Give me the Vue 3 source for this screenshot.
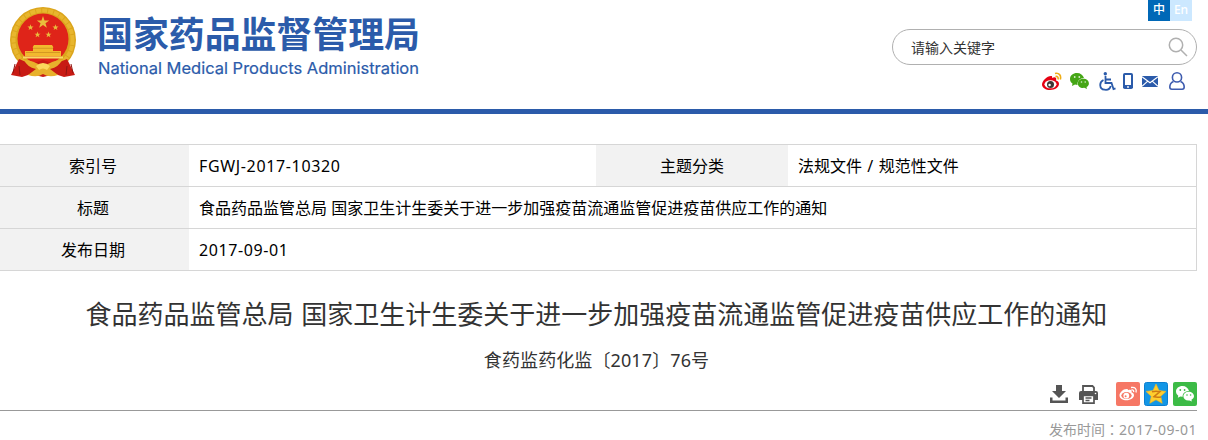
<template>
  <div class="page">
    <header class="header">
      <div class="brand">
        <svg class="emblem" viewBox="0 0 66 70">
          <circle cx="33" cy="33" r="33" fill="#dba51c" />
          <circle cx="33" cy="33" r="29.500" fill="none" stroke="#e8b62e" stroke-width="4" stroke-dasharray="5 1" />
          <circle cx="33" cy="32" r="25.500" fill="#df2419" />
          <polygon v-for="star in stars" :key="star.id" :points="star.points" fill="#e9bd3c" />
          <path d="M24 38h18l1.500 2.500h-21zM23 40.500h20V44H23zM15 44h36v5.500H15z" fill="#f2b92e" />
          <path d="M23 41.300h20M16 45.500h34" stroke="#c98a1c" stroke-width=".7" />
          <path d="M13 49.500h40v2H13z" fill="#f8d965" />
          <path d="M9 52l12 5 12-4 12 4 12-5 8 16-11 2-9-3-12 3-12-3-9 3-11-2z" fill="#c81b14" />
          <path d="M14 53q9 0 19 7 10-7 19-7-3 7-12 9l8 6q-9 3-15-1-6 4-15 1l8-6q-9-2-12-9z" fill="#e8b12c" />
          <path d="M26 59q7-6 14 0l-3 4q-4-3-8 0z" fill="#fbd85c" />
          <path d="M5 57l-2 9M9 59l1 9M61 57l2 9M57 59l-1 9" stroke="#8f1511" stroke-width="1" />
        </svg>
        <svg class="brand-text" viewBox="0 0 330 78">
          <text class="brand-cn" x="-1" y="48" textLength="323" lengthAdjust="spacingAndGlyphs">国家药品监督管理局</text>
          <text class="brand-en" x="0" y="74" textLength="321" lengthAdjust="spacingAndGlyphs">National Medical Products Administration</text>
        </svg>
      </div>

      <div class="tools">
        <div class="lang">
          <span class="lang-item active">中</span>
          <span class="lang-item">En</span>
        </div>
        <div class="search">
          <span>请输入关键字</span>
          <svg width="20" height="20" viewBox="0 0 20 20" fill="none" stroke="#b0b0b0" stroke-width="1.500">
            <circle cx="8" cy="8" r="6.700" />
            <path d="M13 13l6 6" />
          </svg>
        </div>
        <div class="links">
          <svg class="weibo" width="20" height="18" viewBox="0 0 20 18">
            <path d="M9 4C5 4 0 9 0 12.500 0 16 4 18 8 18c5 0 9-3 9-6 0-2-1-3-3-3.500 1-3-1-4-4-2.500C10.500 4.500 10 4 9 4z" fill="#e60012" />
            <ellipse cx="8.500" cy="12.300" rx="6" ry="4" fill="#fff" />
            <circle cx="8.500" cy="12.500" r="3.500" fill="#3d3434" />
            <circle cx="7.600" cy="13" r="1.200" fill="#fff" />
            <path d="M13 1.500c4-1 6.500 2 5.300 6M13.500 4.500c2-.4 3 1 2.500 3" fill="none" stroke="#efad16" stroke-width="1.600" />
          </svg>
          <svg class="wechat" width="19" height="16" viewBox="0 0 19 16">
            <path d="M7 0C3 0 0 2.500 0 6c0 2 1 3.500 2.500 4.500L2 13l3-1.500 2.500.4C7 8 10 5 14 5 13 2 10.500 0 7 0z" fill="#45a616" />
            <path d="M13.300 5.800c-3.200 0-5.500 2-5.500 4.600 0 2.800 2.800 5 6.500 4.400L17 16l-.5-2c1.500-.8 2.400-2 2.400-3.600 0-2.600-2.400-4.600-5.600-4.600z" fill="#45a616" />
            <g fill="#d9efcf">
              <circle cx="4.700" cy="4" r=".9" />
              <circle cx="9.300" cy="4" r=".9" />
              <circle cx="11.500" cy="9" r=".8" />
              <circle cx="15.200" cy="9" r=".8" />
            </g>
          </svg>
          <svg class="access" width="17" height="19" viewBox="0 0 17 19" fill="none" stroke="#2b5baa" stroke-width="1.800">
            <circle cx="6.300" cy="1.800" r="1.700" fill="#2b5baa" stroke="none" />
            <path d="M6.500 4v7h6l2 6 2-.7M7 7.500h5M4.500 8C0 10 0 17 5.500 17.700c3 .5 5.500-1 6.200-3.700" />
          </svg>
          <svg class="phone" width="10" height="16" viewBox="0 0 10 16">
            <rect width="10" height="16" rx="1.800" fill="#2b5baa" />
            <path d="M2 2h6v10H2z" fill="#fff" />
            <circle cx="5" cy="14" r=".9" fill="#fff" />
          </svg>
          <svg class="mail" width="16" height="11" viewBox="0 0 16 11">
            <path d="M0 0h16v11H0z" fill="#2b5baa" />
            <path d="M0 .7l8 6 8-6M0 10.300l5.500-5M16 10.300l-5.500-5" fill="none" stroke="#fff" stroke-width="1.100" />
          </svg>
          <svg class="user" width="16" height="18" viewBox="0 0 16 18" fill="none" stroke="#3e5caf" stroke-width="1.600">
            <circle cx="8" cy="5.400" r="4.600" />
            <path d="M4.500 9.500C2 10.500.8 12.500.8 15c0 1.500.7 2.200 2 2.200h10.400c1.300 0 2-.7 2-2.200 0-2.500-1.200-4.500-3.700-5.500" />
          </svg>
        </div>
      </div>
    </header>

    <table class="info">
      <tbody>
        <tr>
          <th>索引号</th>
          <td class="code">FGWJ-2017-10320</td>
          <th>主题分类</th>
          <td class="category">法规文件 / 规范性文件</td>
        </tr>
        <tr>
          <th>标题</th>
          <td colspan="3">{{ title }}</td>
        </tr>
        <tr>
          <th>发布日期</th>
          <td colspan="3" class="date">{{ date }}</td>
        </tr>
      </tbody>
    </table>

    <main class="article">
      <h1>{{ title }}</h1>
      <p class="number">食药监药化监〔2017〕76号</p>
      <div class="actions">
        <svg class="download" width="18" height="18" viewBox="0 0 18 18" fill="#555">
          <path d="M6 0h6v6h4l-7 7-7-7h4z" />
          <path d="M0 12.500h2.500v3h13v-3H18V18H0z" />
        </svg>
        <svg class="print" width="19" height="19" viewBox="0 0 19 19">
          <path d="M4 6V1h9.500L15 2.500V6" fill="none" stroke="#555" stroke-width="1.800" />
          <path d="M2 6h15q2 0 2 2v7h-4v-4H4v4H0V8q0-2 2-2z" fill="#555" />
          <path d="M4 10.500h11v7.600H4z" fill="#fff" stroke="#555" stroke-width="1.700" />
          <path d="M6.500 13h6M6.500 15.500h4" stroke="#555" stroke-width="1.300" />
          <circle cx="16.500" cy="8.500" r=".8" fill="#fff" />
        </svg>
        <svg class="share-weibo" width="24" height="24" viewBox="0 0 24 24">
          <rect width="24" height="24" rx="2" fill="#f67765" />
          <path d="M10.500 7C7 7 3.500 10.500 3.500 13.500c0 3 3.300 4.800 7 4.800 4.300 0 7.500-2.500 7.500-5 0-1.700-1-2.500-2.500-3 .8-2.300-.8-3-3.500-2 .2-.8-.4-1.300-1.500-1.300z" fill="#fff" />
          <ellipse cx="10.500" cy="13.600" rx="5.200" ry="3.500" fill="#f67765" />
          <circle cx="10.300" cy="13.700" r="2.900" fill="#fff" />
          <circle cx="9.600" cy="14.200" r="1" fill="#f67765" />
          <path d="M15 5.500c4-.8 6 1.500 5 5M15.500 8c1.600-.3 2.500.7 2.100 2.200" fill="none" stroke="#fff" stroke-width="1.300" />
        </svg>
        <svg class="share-qzone" width="24" height="24" viewBox="0 0 24 24">
          <rect x=".5" y=".5" width="23" height="23" rx="2" fill="#1296e6" stroke="#0b7fd0" />
          <path d="M12 2l3 6.500 7 .9-5.200 4.900 1.400 7L12 17.800 5.800 21.300l1.400-7L2 9.400l7-.9z" fill="#ffce2e" stroke="#f6b51b" stroke-width=".6" />
          <path d="M8 9.700q4-1 8 0l-6 5q3 .8 7 .2" fill="none" stroke="#cf7a13" stroke-width="1.500" />
        </svg>
        <svg class="share-wechat" width="24" height="24" viewBox="0 0 24 24">
          <rect width="24" height="24" rx="2" fill="#3cbb46" />
          <path d="M9.500 4C5.700 4 3 6.400 3 9.500c0 1.800.9 3.200 2.300 4.200l-.5 2.100 2.500-1.300 2.400.3C9.300 11.500 12 9 16 9c-.7-3-3.300-5-6.500-5z" fill="#fff" />
          <path d="M15.700 9.800c-3 0-5.300 1.900-5.300 4.400 0 2.700 2.600 4.700 6 4.200l2.500 1.200-.5-1.900c1.500-.8 2.600-2 2.600-3.500 0-2.500-2.400-4.400-5.300-4.400z" fill="#fff" />
          <g fill="#3cbb46">
            <circle cx="7.300" cy="8" r=".9" />
            <circle cx="11.600" cy="8" r=".9" />
            <circle cx="14" cy="13" r=".8" />
            <circle cx="17.600" cy="13" r=".8" />
          </g>
        </svg>
      </div>
      <p class="publish">发布时间<span class="colon">：</span><span class="publish-date">{{ date }}</span></p>
    </main>
  </div>
</template>

<script setup>
const title = "食品药品监管总局 国家卫生计生委关于进一步加强疫苗流通监管促进疫苗供应工作的通知";
const date = "2017-09-01";

const starPoints = (cx, cy, r) =>
  Array.from({ length: 10 }, (_, i) => {
    const radius = i % 2 ? r * 0.4 : r;
    const angle = (Math.PI / 5) * i - Math.PI / 2;
    return `${cx + radius * Math.cos(angle)},${cy + radius * Math.sin(angle)}`;
  }).join(" ");

const stars = [
  [33, 15.5, 6.5],
  [20.5, 20.5, 3.2],
  [45.5, 20.5, 3.2],
  [27.5, 27.7, 3.2],
  [38.5, 27.7, 3.2],
].map(([cx, cy, r], id) => ({ id, points: starPoints(cx, cy, r) }));
</script>

<style>
body {
  margin: 0;
  background: #fff;
}
</style>

<style scoped>
.page {
  width: 1208px;
  height: 440px;
  overflow: hidden;
  font-family: "Noto Sans", "Noto Sans CJK SC", sans-serif;
  color: #333;
}

svg {
  display: block;
  flex: none;
}

.header {
  display: flex;
  justify-content: space-between;
  height: 109px;
  border-bottom: 5px solid #2b5baa;
}

.brand {
  display: flex;
  padding-left: 10px;
}

.emblem {
  width: 66px;
  height: 70px;
  margin-top: 7px;
}

.brand-text {
  width: 330px;
  height: 78px;
  margin-left: 22px;
  overflow: visible;
}

.brand-text text {
  fill: #2b5baa;
}

.brand-cn {
  font: bold 36px "Noto Sans CJK SC", sans-serif;
}

.brand-en {
  font: 400 16.5px Inter, "Liberation Sans", sans-serif;
  stroke: #2b5baa;
  stroke-width: 0.2px;
}

.tools {
  width: 305px;
  margin-right: 11px;
}

.lang {
  display: flex;
  justify-content: flex-end;
  margin-right: 5px;
}

.lang-item {
  width: 22px;
  height: 21px;
  background: #cce8ff;
  color: #fff;
  font-size: 12px;
  font-weight: 500;
  line-height: 20px;
  text-align: center;
}

.lang-item.active {
  background: #0068b7;
}

.search {
  display: flex;
  align-items: center;
  justify-content: space-between;
  box-sizing: border-box;
  height: 36px;
  margin-top: 8px;
  padding: 0 8px 0 18px;
  border: 1px solid #b0b0b0;
  border-radius: 18px;
  font-size: 14px;
}

.search span {
  padding-bottom: 1px;
}

.links {
  display: flex;
  align-items: center;
  justify-content: flex-end;
  height: 20px;
  margin: 6px 12px 0 0;
}

.wechat {
  margin-left: 8px;
}

.access {
  margin-left: 10px;
}

.phone {
  margin-left: 7px;
}

.mail {
  margin-left: 9px;
}

.user {
  margin-left: 11px;
}

.info {
  width: 1197px;
  margin-top: 30px;
  border-collapse: separate;
  border-spacing: 0;
  table-layout: fixed;
  border-top: 1px solid #d6d6d6;
  border-right: 1px solid #d6d6d6;
  font-size: 16px;
  color: #000;
}

.info th,
.info td {
  box-sizing: border-box;
  height: 42px;
  padding: 0;
  border-bottom: 1px solid #d6d6d6;
  line-height: 24px;
  font-weight: normal;
  white-space: nowrap;
}

.info th {
  width: 189px;
  background: #f2f2f2;
  text-align: center;
}

.info th:first-child {
  padding-right: 3px;
}

.info td {
  padding-left: 10px;
  text-align: left;
}

.info tr:first-child td:nth-child(2) {
  width: 407px;
}

.info th:nth-child(3) {
  width: 192px;
}

.info .code {
  letter-spacing: 0.65px;
}

.info .category {
  word-spacing: 1.2px;
}

.info .date {
  letter-spacing: 0.6px;
}

.article {
  width: 1197px;
}

h1 {
  margin: 23px 0 0;
  padding-right: 4px;
  font-size: 26px;
  font-weight: normal;
  line-height: 40px;
  text-align: center;
  word-spacing: 1px;
  white-space: nowrap;
}

.number {
  margin: 15px 0 0;
  padding-right: 4px;
  font-size: 18px;
  line-height: 22px;
  text-align: center;
  letter-spacing: 0.1px;
}

.actions {
  display: flex;
  align-items: flex-end;
  justify-content: flex-end;
  box-sizing: border-box;
  height: 40px;
  padding-bottom: 4px;
  border-bottom: 1px solid #999;
}

.download {
  margin-bottom: 3px;
}

.print {
  margin: 0 0 2px 11px;
}

.share-weibo {
  margin-left: 18px;
}

.share-qzone {
  margin-left: 4px;
}

.share-wechat {
  margin-left: 5px;
}

.publish {
  margin: 7px 0 0;
  font-size: 14px;
  line-height: 22px;
  text-align: right;
  color: #999;
}

.colon {
  font-family: "Noto Sans CJK TC", sans-serif;
}

.publish-date {
  letter-spacing: 0.5px;
}
</style>
